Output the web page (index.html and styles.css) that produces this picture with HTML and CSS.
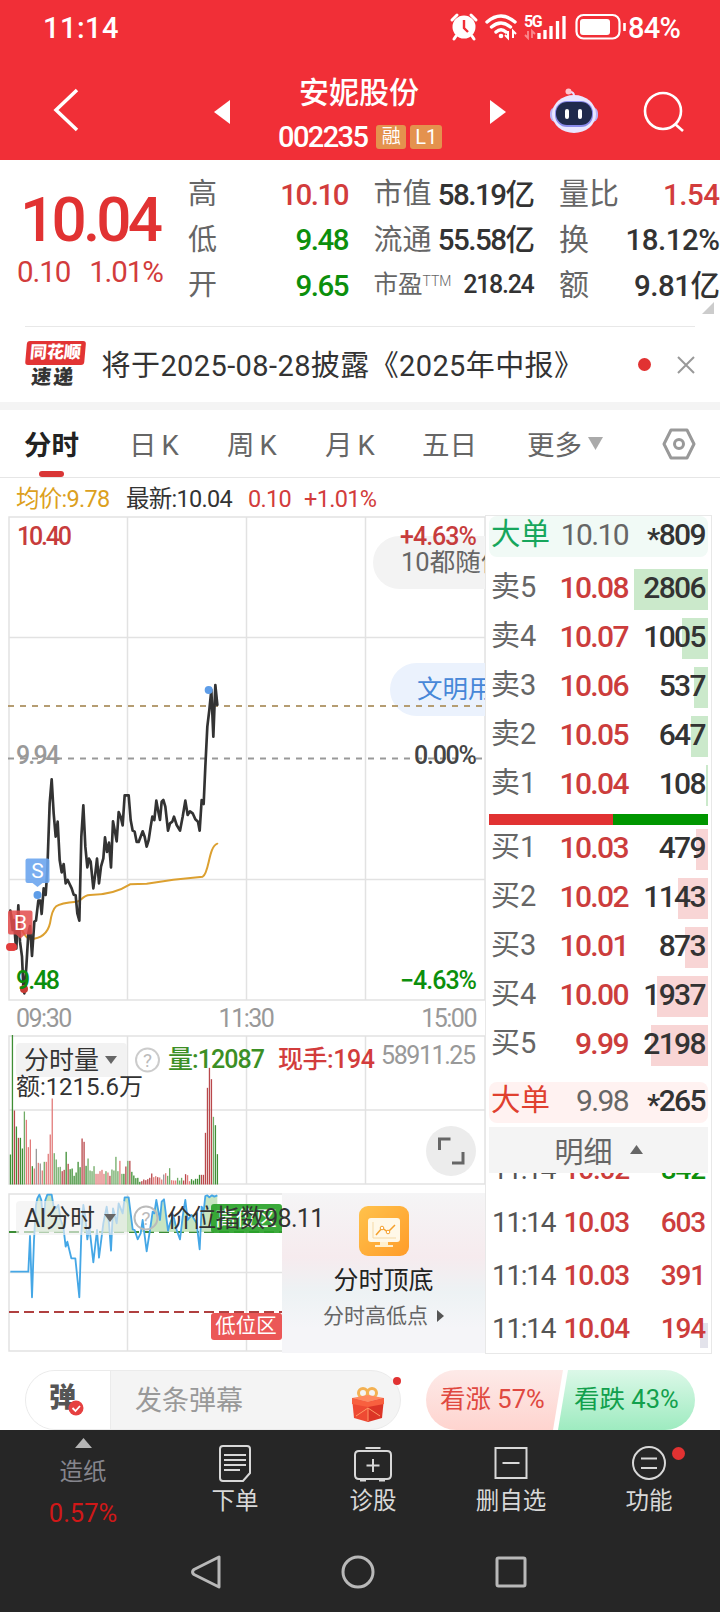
FILE: index.html
```html
<!DOCTYPE html>
<html lang="zh-CN">
<head>
    <meta charset="UTF-8">
    <meta name="viewport" content="width=device-width, initial-scale=1.0">
    <title>安妮股份 002235</title>
    <link rel="stylesheet" href="styles.css">
</head>
<body>
    <header class="header">
        <div class="statusbar">
            <span class="clock">11:14</span>
            <svg class="status-icons" width="178" height="30" viewBox="449 12 178 30" fill="none" stroke="#fff">
                <circle cx="464" cy="27" r="11.5" fill="#fff" stroke="none"/>
                <path d="M452 20l5-5M471 15l5 5M456 36l-2 3M472 36l2 3" stroke-width="3" stroke-linecap="round"/>
                <path d="M464 20v8l4 4" stroke="#f12f37" stroke-width="2.4"/>
                <path d="M487 22q14-12 28 0M491.500 27q9.500-8 19 0M496 32q5-4.500 10 0" stroke-width="3.400" stroke-linecap="round"/>
                <circle cx="501" cy="36" r="2.300" fill="#fff" stroke="none"/>
                <path d="M508 31v7l-3-3M513 38v-7l3 3" stroke-width="2"/>
                <text x="524" y="27" class="net">5G</text>
                <path d="M528 31v7l-3-3M532 38v-7l3 3" stroke="#f98a8e" stroke-width="1.800"/>
                <path d="M539 33v6M545 30v9M551 26v13M557.500 21v18M564 16v23" stroke-width="3.300"/>
                <rect x="576.500" y="15" width="43" height="23.500" rx="7" stroke-width="2.200"/>
                <rect x="580" y="19" width="30" height="16" rx="3" fill="#fff" stroke="none"/>
                <path d="M624.500 23v8" stroke-width="2.600"/>
            </svg>
            <span class="battery">84%</span>
        </div>
        <nav class="nav">
            <svg class="back" width="26" height="44" viewBox="0 0 26 44"><path d="M24 2L3 22l21 20" fill="none" stroke="#fff" stroke-width="3.500"/></svg>
            <svg class="prev" width="16" height="24" viewBox="0 0 16 24"><path d="M16 0v24L0 12z" fill="#fff"/></svg>
            <div class="title">
                <div class="name">安妮股份</div>
                <div class="code">002235<span class="tag">融</span><span class="tag tag-l1">L1</span></div>
            </div>
            <svg class="next" width="16" height="24" viewBox="0 0 16 24"><path d="M0 0v24L16 12z" fill="#fff"/></svg>
            <svg class="robot" width="50" height="46" viewBox="0 0 50 46">
                <path d="M25 8q0-4-4-4" fill="none" stroke="#e8dcff" stroke-width="2"/>
                <circle cx="19.500" cy="3.500" r="3" fill="#ffc5cf"/>
                <rect x="1" y="19" width="48" height="15" rx="6" fill="#b9b2f5"/>
                <ellipse cx="25" cy="26" rx="22" ry="19" fill="#e9e6ff"/>
                <rect x="6" y="13" width="38" height="26" rx="12" fill="#8a8bea"/>
                <rect x="7" y="14" width="36" height="23" rx="11" fill="#202a4c"/>
                <rect x="16" y="21" width="4" height="10" rx="2" fill="#fff"/>
                <rect x="29" y="21" width="4" height="10" rx="2" fill="#fff"/>
            </svg>
            <svg class="search" width="42" height="42" viewBox="0 0 42 42" fill="none" stroke="#fff" stroke-width="2.600"><circle cx="20" cy="20" r="18"/><path d="M32 33l8 7"/></svg>
        </nav>
    </header>

    <section class="quote">
        <div class="price">
            <div class="price-now">10.04</div>
            <div class="price-change"><span>0.10</span><span>1.01%</span></div>
        </div>
        <dl class="stats">
            <div><dt>高</dt><dd class="up">10.10</dd></div>
            <div><dt>市值</dt><dd>58.19亿</dd></div>
            <div class="wide"><dt>量比</dt><dd class="up">1.54</dd></div>
            <div><dt>低</dt><dd class="down">9.48</dd></div>
            <div><dt>流通</dt><dd>55.58亿</dd></div>
            <div class="wide"><dt>换</dt><dd>18.12%</dd></div>
            <div><dt>开</dt><dd class="down">9.65</dd></div>
            <div class="small"><dt>市盈<sup>TTM</sup></dt><dd>218.24</dd></div>
            <div class="wide"><dt>额</dt><dd>9.81亿</dd></div>
        </dl>
        <i class="corner"></i>
    </section>

    <section class="news">
        <div class="news-logo"><b>同花顺</b><em>速递</em></div>
        <span class="news-text">将于2025-08-28披露《2025年中报》</span>
        <i class="dot"></i>
        <svg width="18" height="18" viewBox="0 0 18 18"><path d="M1 1l16 16M17 1L1 17" stroke="#999" stroke-width="2"/></svg>
    </section>

    <nav class="tabs">
        <span class="tab active">分时</span>
        <span class="tab">日<i>K</i></span>
        <span class="tab">周<i>K</i></span>
        <span class="tab">月<i>K</i></span>
        <span class="tab">五日</span>
        <span class="tab">更多<svg width="15" height="13" viewBox="0 0 15 13"><path d="M0 0h15L7.500 13z" fill="#aaa"/></svg></span>
        <svg class="setting" width="34" height="32" viewBox="0 0 34 32" fill="none" stroke="#999" stroke-width="3"><path d="M9 2h16l7 14-7 14H9L2 16z" stroke-linejoin="round"/><circle cx="17" cy="16" r="4.500"/></svg>
    </nav>

    <div class="legend">
        <span class="avg">均价:9.78</span><span class="last">最新:10.04</span><span class="up diff">0.10</span><span class="up">+1.01%</span>
    </div>

    <main class="main">
        <div class="charts">
            <svg class="chart" width="486" height="488" viewBox="0 515 486 488">
                <g class="grid">
                    <path d="M9 517H485V1000H9zM127.500 517V1000M246.500 517V1000M365.500 517V1000M9 637.500H485M9 879.500H485"/>
                </g>
                <rect x="373" y="536" width="200" height="53" rx="26.500" fill="#f3f3f3"/>
                <text x="401" y="571" class="danmu">10都随便</text>
                <rect x="390" y="663" width="200" height="53" rx="26.500" fill="#ebf2fd"/>
                <text x="417" y="698" class="danmu blue">文明用语</text>
                <path d="M8 706H485" stroke="#b59d72" stroke-width="2" stroke-dasharray="6 6"/>
                <path d="M8 758.500H485" stroke="#999" stroke-width="2" stroke-dasharray="6 6"/>
                <!-- price and average lines, drawn in thirds of a pixel -->
                <g transform="translate(0 640) scale(.33333)" fill="none" stroke-linejoin="round" stroke-linecap="round">
                    <path stroke="#dca030" stroke-width="6" d="M31 812L45 860L66 870Q78 895 90 898Q140 895 150 850C158 795 165 790 230 785C245 785 245 766 270 765Q340 765 390 733L440 731L520 719L608 710C628 700 625 620 652 611"/>
                    <polyline stroke="#333" stroke-width="8" points="31,812 38,870 42,840 46,900 49,925 55,796 60,905 66,950 70,1040 73,1060 79,980 85,880 90,858 96,948 103,845 108,842 115,782 121,782 125,822 131,745 137,765 142,690 149,490 155,418 161,520 167,590 173,545 179,660 185,697 191,672 197,730 203,720 215,745 221,764 227,766 232,820 238,842 244,590 250,496 256,620 262,682 267,656 272,665 280,745 286,700 291,656 297,730 303,680 310,655 315,592 321,636 327,608 333,682 339,544 345,575 350,604 356,516 362,530 368,556 374,466 386,466 392,540 398,572 404,575 410,606 416,606 428,574 434,590 440,620 446,600 452,560 457,530 463,540 469,482 475,515 480,540 485,485 490,480 496,500 504,572 510,550 517,545 522,530 530,555 540,572 548,530 556,482 563,525 570,514 578,520 586,538 594,545 599,572 605,480 611,492 616,380 622,260 628,210 634,150 640,290 646,135 652,195"/>
                </g>
                <circle cx="208.700" cy="690" r="4" fill="#5e9de8"/>
                <circle cx="37.500" cy="895" r="4" fill="#5e9de8"/>
                <path d="M27.500 858.500h20a2 2 0 0 1 2 2v20.500a2 2 0 0 1-2 2h-5l-5 4-5-4h-5a2 2 0 0 1-2-2v-20.500a2 2 0 0 1 2-2z" fill="#6ba5ee" fill-opacity=".9"/>
                <text x="37.500" y="878" class="mark">S</text>
                <path d="M10 910.500h20.500a2 2 0 0 1 2 2v20a2 2 0 0 1-2 2h-5.500l-4.500 4-4.500-4h-6a2 2 0 0 1-2-2v-20a2 2 0 0 1 2-2z" fill="#e34b4b" fill-opacity=".85"/>
                <text x="20.500" y="930" class="mark">B</text>
                <circle cx="10" cy="947" r="4" fill="#e23d3d"/><circle cx="13" cy="947" r="4" fill="#e23d3d"/><circle cx="24" cy="989" r="4" fill="#c93b35"/>
                <text x="17" y="545" class="num red" textLength="55">10.40</text>
                <text x="400" y="545" class="num red" textLength="77">+4.63%</text>
                <text x="16" y="764" class="num gray" textLength="44">9.94</text>
                <text x="414" y="764" class="num" textLength="63">0.00%</text>
                <text x="16" y="989" class="num green" textLength="44">9.48</text>
                <text x="400" y="989" class="num green" textLength="77">−4.63%</text>
            </svg>
            <div class="times"><span>09:30</span><span>11:30</span><span>15:00</span></div>
            <svg class="volume" width="486" height="151" viewBox="0 1035 486 151">
                <g class="grid"><path d="M9 1036H485V1184H9zM127.500 1036V1184M246.500 1036V1184M365.500 1036V1184M9 1110H485"/></g>
                <rect x="16" y="1043" width="111" height="34" rx="4" fill="#f2f2f2"/>
                <g id="bars"></g>
                <text x="24" y="1069" class="ind">分时量</text>
                <path d="M105 1056h12l-6 8z" fill="#666"/>
                <circle cx="147.500" cy="1060" r="11.500" fill="none" stroke="#ccc" stroke-width="2"/>
                <text x="147.500" y="1067" class="help">?</text>
                <text x="168" y="1068" class="ind vol" textLength="97">量:12087</text>
                <text x="278" y="1068" class="ind hand" textLength="97">现手:194</text>
                <text x="381" y="1064" class="num gray light" textLength="95">58911.25</text>
                <text x="16" y="1095" class="ind amount" textLength="127">额:1215.6万</text>
                <circle cx="451" cy="1151" r="25" fill="#ececec"/>
                <path d="M439.500 1150v-11h11M463 1152v11h-11" fill="none" stroke="#666" stroke-width="3"/>
            </svg>
            <div class="ai">
                <svg width="282" height="160" viewBox="0 1193 282 160">
                    <clipPath id="high"><rect x="0" y="0" width="900" height="156"/></clipPath>
                    <g class="grid"><path d="M9 1194H300V1351H9zM127.500 1194V1351M246.500 1194V1351M9 1272.500H300"/></g>
                    <path d="M9 1232H282" stroke="#3c8c35" stroke-width="2" stroke-dasharray="10 5"/>
                    <path d="M9 1312H282" stroke="#b04040" stroke-width="2" stroke-dasharray="10 5"/>
                    <g transform="translate(0 1180) scale(.33333)">
                        <path id="aifill" clip-path="url(#high)" fill="#b9dfb2" fill-opacity=".8"/>
                        <polyline id="ailine" fill="none" stroke="#45a7e6" stroke-width="5.500" stroke-linejoin="round" points="31,275 85,275 90,168 96,352 102,180 108,75 112,55 118,44 124,60 130,140 136,60 142,44 155,44 161,80 168,85 175,75 182,120 190,140 197,200 202,185 214,235 226,235 238,352 244,160 250,75 256,110 262,178 268,140 280,247 291,150 297,233 310,130 320,80 327,130 333,212 339,85 350,130 356,70 368,100 374,52 386,52 392,100 398,148 404,150 413,178 422,160 428,120 440,214 450,150 458,95 463,100 469,60 480,120 485,65 492,58 504,152 510,130 520,105 530,150 540,178 548,110 556,60 563,120 575,105 590,130 599,208 605,80 611,95 616,48 622,46 628,52 636,46 643,50 652,46"/>
                    </g>
                    <rect x="16" y="1201" width="111" height="34" rx="4" fill="#f0f0f0" fill-opacity=".65"/>
                    <rect x="211" y="1204" width="71" height="29" rx="3" fill="#2aa32a" fill-opacity=".92"/>
                    <text x="246" y="1226" class="zone">高位区</text>
                    <rect x="211" y="1313" width="71" height="27" rx="3" fill="#eb5757"/>
                    <text x="246" y="1333" class="zone">低位区</text>
                    <path d="M104 1214h12l-6 8z" fill="#666"/>
                    <circle cx="146" cy="1218" r="11.500" fill="none" stroke="#bbb" stroke-width="2"/>
                    <text x="146" y="1225" class="help">?</text>
                </svg>
                <div class="promo">
                    <svg width="50" height="50" viewBox="0 0 50 50">
                        <defs><linearGradient id="or" x1="0" y1="0" x2="1" y2="1"><stop offset="0" stop-color="#ffc24c"/><stop offset="1" stop-color="#ff9c29"/></linearGradient></defs>
                        <rect width="50" height="50" rx="9" fill="url(#or)"/>
                        <rect x="9" y="12" width="32" height="24" rx="3" fill="#fff8e8"/>
                        <path d="M21 36h8v3h5v2H16v-2h5z" fill="#fff0cf"/>
                        <path d="M14 16v16h23" fill="none" stroke="#f5d9a6"/>
                        <path d="M17 29l6-7 6 4 7-7" fill="none" stroke="#f5a02d" stroke-width="1.500"/>
                        <circle cx="23" cy="22" r="1.800" fill="#fff" stroke="#f5a02d"/><circle cx="29" cy="26" r="1.800" fill="#fff" stroke="#f5a02d"/>
                    </svg>
                    <strong>分时顶底</strong>
                    <span>分时高低点<i></i></span>
                </div>
                <div class="ai-caption"><span>AI分时</span><span>价位指数98.11</span></div>
            </div>
        </div>

        <aside class="book">
            <div class="big sell"><span>大单</span><b>10.10</b><b><u>*</u>809</b></div>
            <div class="level sell"><span>卖5</span><b>10.08</b><b>2806</b><i style="width:74px"></i></div>
            <div class="level sell"><span>卖4</span><b>10.07</b><b>1005</b><i style="width:26px"></i></div>
            <div class="level sell"><span>卖3</span><b>10.06</b><b>537</b><i style="width:14px"></i></div>
            <div class="level sell"><span>卖2</span><b>10.05</b><b>647</b><i style="width:17px"></i></div>
            <div class="level sell"><span>卖1</span><b>10.04</b><b>108</b><i style="width:2px"></i></div>
            <div class="ratio"><i style="width:124px"></i></div>
            <div class="level buy"><span>买1</span><b>10.03</b><b>479</b><i style="width:12px"></i></div>
            <div class="level buy"><span>买2</span><b>10.02</b><b>1143</b><i style="width:30px"></i></div>
            <div class="level buy"><span>买3</span><b>10.01</b><b>873</b><i style="width:23px"></i></div>
            <div class="level buy"><span>买4</span><b>10.00</b><b>1937</b><i style="width:51px"></i></div>
            <div class="level buy"><span>买5</span><b>9.99</b><b>2198</b><i style="width:57px"></i></div>
            <div class="big buy"><span>大单</span><b>9.98</b><b><u>*</u>265</b></div>
            <div class="detail">明细<svg width="13" height="9" viewBox="0 0 13 9"><path d="M0 9h13L6.500 0z" fill="#666"/></svg></div>
            <div class="trades">
                <div><span>11:14</span><b>10.02</b><b class="down">842</b></div>
                <div><span>11:14</span><b>10.03</b><b>603</b></div>
                <div><span>11:14</span><b>10.03</b><b>391</b></div>
                <div><span>11:14</span><b>10.04</b><b>194</b></div>
                <i class="scroll"></i>
            </div>
        </aside>
    </main>

    <section class="comment">
        <div class="input">
            <div class="switch">弹<svg width="16" height="16" viewBox="0 0 16 16"><circle cx="8" cy="8" r="7.500" fill="#e64040"/><path d="M4.500 8l3 3 4.500-5" fill="none" stroke="#fff" stroke-width="1.800"/></svg></div>
            <div class="placeholder">发条弹幕</div>
            <svg class="gift" width="34" height="36" viewBox="0 0 34 36">
                <circle cx="12" cy="6" r="4.500" fill="none" stroke="#f3b152" stroke-width="3"/><circle cx="21" cy="6" r="4.500" fill="none" stroke="#f3b152" stroke-width="3"/>
                <path d="M1 11l16-3 16 3-16 4z" fill="#ff8a60"/>
                <path d="M1 11l16 4v20L3 31z" fill="#ee4a33"/><path d="M33 11l-16 4v20l14-4z" fill="#dc3527"/>
                <path d="M1 11l16 4v5L1 17zM33 11l-16 4v5l16-3z" fill="#f8603f"/>
                <path d="M17 21L5 29M17 21l12 8M17 21v13" stroke="#ff9966" fill="none"/>
            </svg>
            <i class="badge"></i>
        </div>
        <div class="vote">
            <span class="vote-up">看涨 57%</span><span class="vote-down">看跌 43%</span>
        </div>
    </section>

    <footer class="footer">
        <div class="actions">
            <div class="industry"><svg width="17" height="10" viewBox="0 0 17 10"><path d="M0 10h17L8.500 0z" fill="#b5b5b5"/></svg><span>造纸</span><em>0.57%</em></div>
            <div class="action">
                <svg width="40" height="40" viewBox="0 0 40 40"><path d="M8 3h24q3 0 3 3v24l-7 8H8q-3 0-3-3V6q0-3 3-3zM9 12h22M9 17h22M9 22h22M9 27h16"/></svg>下单
            </div>
            <div class="action">
                <svg width="40" height="40" viewBox="0 0 40 40"><path d="M6 8h28q4 0 4 4v20q0 4-4 4H6q-4 0-4-4V12q0-4 4-4zM12.500 5h15M20 16v13M13.500 22.500h13M7 37.500h6M26 37.500h6"/></svg>诊股
            </div>
            <div class="action">
                <svg width="40" height="40" viewBox="0 0 40 40"><path d="M4.500 5h31v30h-31zM11.500 20h17"/></svg>删自选
            </div>
            <div class="action">
                <svg width="40" height="40" viewBox="0 0 40 40"><circle cx="20" cy="20" r="16"/><path d="M12 15.500h16M12 25h16"/></svg>功能<i class="badge"></i>
            </div>
        </div>
        <div class="sysnav">
            <svg width="30" height="34" viewBox="0 0 30 34"><path d="M28 2v30L3 19.500Q0 17 3 14.500z"/></svg>
            <svg width="34" height="34" viewBox="0 0 34 34"><circle cx="17" cy="17" r="15"/></svg>
            <svg width="32" height="32" viewBox="0 0 32 32"><rect x="2" y="2" width="28" height="28" rx="1.500"/></svg>
        </div>
    </footer>

    <script>
        // r/g - strong red/green, R/G - light, n - neutral; number is the bar height
        const bars = 'g90 g449 r222 g174 r140 g140 g108 G219 R194 R112 R135 g55 R48 n107 R65 n63 R42 G68 R68 R92 R150 R258 G94 G75 G52 G53 r40 r44 g98 r62 g46 g48 g26 g36 g68 g52 r138 r128 g56 G78 G42 G40 G55 R32 R32 R40 R44 R32 G40 R36 r26 G45 G42 G83 G40 R71 G32 g32 r54 G71 r71 g38 g27 g19 g20 g8 r10 r15 r13 r16 r20 r33 R22 R25 r22 R21 R15 n30 R34 G26 G49 R13 R12 R12 G20 G12 G20 r12 r31 R28 R10 g16 g12 g17 g17 g29 r29 r29 r155 r290 r350 r316 G203 g178 g91';
        const colors = { r: '#b9484b', g: '#3f8f35', R: '#e27b7a', G: '#70ab66', n: '#999' };
        document.getElementById('bars').innerHTML = bars.split(' ').map((bar, i) => {
            const h = bar.slice(1) / 3;
            return `<rect x="${(9.800 + i * 1.990).toFixed(2)}" y="${(1184.500 - h).toFixed(2)}" width="1.3" height="${h.toFixed(2)}" fill="${colors[bar[0]]}"/>`;
        }).join('');

        const line = document.getElementById('ailine').getAttribute('points');
        document.getElementById('aifill').setAttribute('d', 'M' + line + ' 652,275z');
    </script>
</body>
</html>
```

FILE: styles.css
```css
* {
    box-sizing: border-box;
}
body {
    margin: 0;
    width: 720px;
    height: 1612px;
    overflow: hidden;
    background: #fff;
    color: #333;
    font-family: Roboto, "Noto Sans CJK SC", sans-serif;
}
svg {
    display: block;
    flex: none;
}
i, em {
    font-style: normal;
}
.up {
    color: #d23c3c;
}
.down {
    color: #0c8f0c;
}

/* header */
.header {
    height: 160px;
    background: #f12f37;
    color: #fff;
}
.statusbar {
    display: flex;
    align-items: center;
    height: 54px;
    padding-left: 43px;
    font-size: 29px;
    line-height: 36px;
    font-weight: 500;
}
.clock {
    width: 406px;
    padding-top: 2px;
    letter-spacing: 0.5px;
}
.battery {
    margin-left: 1px;
    padding-top: 2px;
    letter-spacing: -0.7px;
}
.net {
    font-size: 16px;
    font-weight: 700;
    fill: #fff;
    stroke: none;
    letter-spacing: -1.5px;
}
.nav {
    display: flex;
    height: 106px;
    padding-top: 2px;
}
.back {
    margin: 32px 0 0 53px;
}
.prev {
    margin: 44px 0 0 135px;
}
.title {
    width: 258px;
    text-align: center;
}
.name {
    margin-top: 17px;
    font-size: 30px;
    line-height: 40px;
    font-weight: 500;
}
.code {
    display: flex;
    align-items: center;
    height: 48px;
    margin: 0 0 0 48px;
    font-size: 29px;
    font-weight: 500;
    letter-spacing: -1.6px;
}
.tag {
    width: 30px;
    height: 24px;
    margin-left: 9px;
    border-radius: 3px;
    background: #e4924e;
    font-size: 19px;
    line-height: 24px;
    font-weight: 400;
    letter-spacing: 0;
}
.tag-l1 {
    width: 32px;
    margin-left: 4px;
    font-size: 20px;
}
.next {
    margin: 44px 0 0 2px;
}
.robot {
    margin: 32px 0 0 43px;
}
.search {
    margin: 35px 0 0 44px;
}

/* quote */
.quote {
    display: flex;
    position: relative;
    height: 166px;
}
.price {
    width: 188px;
    padding-top: 27px;
    color: #e13232;
}
.price-now {
    padding-left: 20px;
    font-size: 62px;
    line-height: 66px;
    font-weight: 500;
    letter-spacing: -3.8px;
}
.price-change {
    display: flex;
    gap: 19px;
    padding: 1px 0 0 17px;
    color: #d23c3c;
    font-size: 29.500px;
    line-height: 36px;
    letter-spacing: -1.1px;
}
.stats {
    display: grid;
    grid-template-columns: 160px 160px 160.500px;
    grid-template-rows: repeat(3, 45.500px);
    column-gap: 25.500px;
    margin: 12px 0 0;
}
.stats div {
    display: flex;
    justify-content: space-between;
    align-items: center;
    white-space: nowrap;
}
.stats dt {
    color: #666;
    font-size: 29px;
    line-height: 44px;
    padding-bottom: 1px;
}
.stats dd {
    margin: 0;
    font-size: 29.500px;
    line-height: 44px;
    font-weight: 500;
    letter-spacing: -1.5px;
}
.stats .wide dt {
    font-size: 30px;
}
.stats .wide dd {
    letter-spacing: -0.5px;
}
.stats .small dt {
    font-size: 24.500px;
}
.stats .small dd {
    font-size: 25px;
    letter-spacing: -1.3px;
    padding-bottom: 2px;
}
.stats sup {
    font-size: 14px;
    font-weight: 300;
    vertical-align: 7px;
    line-height: 0;
}
.corner {
    position: absolute;
    right: 6px;
    bottom: 12px;
    border-left: 12px solid transparent;
    border-bottom: 12px solid #ccc;
}

/* news */
.news {
    display: flex;
    align-items: center;
    height: 76px;
    margin: 0 25px;
    border-top: 1px solid #e8e8e8;
}
.news-logo {
    width: 59px;
    height: 48px;
    text-align: center;
    transform: skewX(-5deg);
}
.news-logo b {
    display: block;
    height: 24px;
    border-radius: 3px;
    background: #e23434;
    color: #fff;
    font-size: 17px;
    line-height: 23px;
    font-weight: 900;
}
.news-logo em {
    display: block;
    font-size: 20px;
    line-height: 25px;
    font-weight: 900;
    letter-spacing: 2px;
}
.news-text {
    width: 540px;
    margin-left: 18px;
    padding-bottom: 4px;
    font-size: 29px;
    letter-spacing: 0.4px;
    white-space: nowrap;
}
.dot {
    width: 13px;
    height: 13px;
    margin-right: 26px;
    border-radius: 50%;
    background: #e13232;
}

/* period tabs */
.tabs {
    display: flex;
    position: relative;
    height: 76px;
    padding-left: 24px;
    border-top: 8px solid #f4f4f4;
    border-bottom: 1px solid #e6e6e6;
    color: #666;
    font-size: 27.500px;
    line-height: 67px;
}
.tab {
    display: flex;
    align-items: center;
    width: 98px;
    padding-top: 3px;
}
.tab i {
    margin-left: 5px;
}
.tab:nth-child(1) {
    width: 105px;
}
.tab:nth-child(4) {
    width: 97px;
}
.tab:nth-child(5) {
    width: 105px;
}
.tab:nth-child(6) {
    width: 135px;
}
.tab svg {
    margin: -4px 0 0 6px;
}
.active {
    color: #222;
    font-weight: 700;
}
.active::after {
    content: "";
    position: absolute;
    left: 39px;
    bottom: 0;
    width: 25px;
    height: 6px;
    border-radius: 3px;
    background: #d93636;
}
.setting {
    margin-top: 18px;
}

.legend {
    display: flex;
    height: 37px;
    padding: 3px 0 0 16px;
    font-size: 23.500px;
    line-height: 36px;
    letter-spacing: -0.7px;
}
.avg {
    width: 110px;
    color: #dca020;
}
.last {
    width: 122px;
}
.diff {
    width: 56px;
}

/* charts */
.main {
    display: flex;
    height: 839px;
}
.charts {
    width: 485px;
}
.grid {
    fill: none;
    stroke: #e2e2e2;
    stroke-width: 1.5;
}
.num {
    font-size: 25px;
    font-weight: 500;
    fill: #444;
}
.num.red {
    fill: #c73c3c;
}
.num.green {
    fill: #0c8f0c;
}
.num.gray {
    fill: #999;
}
.num.light {
    font-weight: 400;
}
.danmu {
    font-size: 25.500px;
    fill: #666;
}
.danmu.blue {
    fill: #4787d8;
}
.mark {
    font-size: 21px;
    fill: #fff;
    text-anchor: middle;
}
.times {
    display: flex;
    justify-content: space-between;
    height: 32px;
    padding: 0 9px 0 16px;
    color: #999;
    font-size: 25px;
    line-height: 31px;
    letter-spacing: -1.5px;
}
.ind {
    font-size: 25px;
    fill: #333;
}
.ind.vol {
    font-weight: 500;
    fill: #3c8f25;
}
.ind.hand {
    font-weight: 500;
    fill: #d23c3c;
}
.ind.amount {
    font-size: 24px;
}
.help {
    font-size: 19px;
    fill: #bbb;
    text-anchor: middle;
}
.zone {
    font-size: 20.500px;
    fill: #fff;
    text-anchor: middle;
}
.ai {
    display: flex;
    position: relative;
    height: 160px;
    margin-top: 7px;
}
.ai-caption {
    position: absolute;
    left: 24px;
    top: 8px;
    display: flex;
    font-size: 25px;
    line-height: 36px;
    white-space: nowrap;
    letter-spacing: -0.7px;
}
.ai-caption span:first-child {
    width: 143px;
}
.promo {
    width: 203px;
    padding-top: 13px;
    background: linear-gradient(#f5f5f6, #f6ebee 40%, #edf2f4 62%, #f5f5f8 85%);
    text-align: center;
}
.promo svg {
    margin: 0 auto 7px;
}
.promo strong {
    display: block;
    color: #222;
    font-size: 25px;
    line-height: 36px;
    font-weight: 400;
}
.promo span {
    display: flex;
    align-items: center;
    justify-content: center;
    color: #666;
    font-size: 21px;
    line-height: 34px;
}
.promo span i {
    margin-left: 9px;
    border: 6px solid transparent;
    border-left: 7px solid #555;
    border-right: 0;
}

/* order book */
.book {
    width: 227px;
    border: 1px solid #e8e8e8;
    padding: 0 3px;
    font-size: 29px;
}
.book b {
    padding-right: 1px;
    font-size: 30px;
    font-weight: 500;
    letter-spacing: -1.6px;
    text-align: right;
    z-index: 1;
}
.book u {
    position: relative;
    top: 4px;
    text-decoration: none;
}
.big, .level {
    display: grid;
    grid-template-columns: 60px 78px 77px;
    position: relative;
    height: 41px;
    padding-left: 2px;
    color: #333;
    line-height: 38px;
    white-space: nowrap;
}
.big span, .level span {
    line-height: 36px;
}
.big {
    border-radius: 8px;
}
.big span {
    font-size: 29.500px;
}
.big b:nth-child(2) {
    color: #666;
    font-weight: 400;
}
.big.sell {
    margin-bottom: 12px;
    background: #f1faf6;
}
.big.sell span {
    color: #17a65c;
}
.big.buy {
    margin-top: 15.500px;
    background: #fff2f1;
}
.big.buy span {
    color: #e0402f;
}
.level {
    margin-bottom: 8px;
}
.level span {
    color: #666;
}
.level b:nth-child(2) {
    color: #cc3d3c;
}
.level i {
    position: absolute;
    right: 0;
    top: 0;
    height: 41px;
    background: #cbe9cb;
}
.buy i {
    background: #f8d5d5;
}
.ratio {
    height: 10.500px;
    margin-bottom: 4.500px;
    background: #009600;
}
.ratio i {
    display: block;
    height: 100%;
    background: #e13232;
}
.detail {
    display: flex;
    align-items: center;
    justify-content: center;
    gap: 17px;
    height: 46px;
    margin-top: 4px;
    background: #f4f4f4;
    color: #666;
}
.trades {
    position: relative;
    height: 177px;
    overflow: hidden;
}
.trades div {
    display: grid;
    grid-template-columns: 60px 79px 76px;
    align-items: center;
    height: 53px;
    padding-left: 3px;
    color: #cc3d3c;
}
.trades div:first-child {
    margin-top: -30px;
}
.trades span {
    color: #555;
    font-size: 28px;
    letter-spacing: -1.3px;
}
.trades b {
    padding: 0 2px 0 0;
    font-size: 28px;
    letter-spacing: -1.2px;
}
.trades .down {
    color: #0c8f0c;
}
.scroll {
    position: absolute;
    right: 0;
    bottom: 2px;
    width: 8px;
    height: 25px;
    background: rgba(200, 200, 215, 0.5);
}

/* comment line */
.comment {
    display: flex;
    justify-content: space-between;
    height: 76px;
    padding: 16px 25px 0;
}
.input {
    display: flex;
    position: relative;
    width: 376px;
    height: 60px;
    border: 1px solid #ebebeb;
    border-radius: 30px;
    background: #f4f4f4;
}
.switch {
    position: relative;
    width: 85px;
    padding-left: 23px;
    border-right: 1px solid #ebebeb;
    border-radius: 30px 0 0 30px;
    background: #fff;
    color: #555;
    font-size: 27px;
    line-height: 54px;
    font-weight: 900;
}
.switch svg {
    position: absolute;
    left: 42px;
    top: 29px;
}
.placeholder {
    width: 241px;
    padding-left: 24px;
    color: #999;
    font-size: 27px;
    line-height: 60px;
}
.gift {
    margin: 16px 0 0 -1px;
}
.badge {
    position: absolute;
    right: -1px;
    top: 6px;
    width: 8px;
    height: 8px;
    border-radius: 50%;
    background: #e13232;
}
.vote {
    display: flex;
    position: relative;
    width: 269px;
    height: 60px;
    font-size: 25.500px;
    line-height: 59px;
    white-space: nowrap;
}
.vote span {
    width: 137px;
    padding-left: 14px;
}
.vote-up {
    border-radius: 30px 0 0 30px;
    background: linear-gradient(#fdeae8, #fed4cf);
    clip-path: polygon(0 0, 100% 0, 127px 100%, 0 100%);
    color: #e04840;
}
.vote .vote-down {
    width: 137px;
    margin-left: -5px;
    border-radius: 0 30px 30px 0;
    background: linear-gradient(#dcf8e8, #9eebc0);
    clip-path: polygon(10px 0, 100% 0, 100% 100%, 0 100%);
    color: #12a04d;
    padding-left: 16px;
}

/* footer */
.footer {
    height: 183px;
    background: #262626;
    color: #d8d8d8;
}
.actions {
    display: flex;
    height: 112px;
    padding-left: 13px;
    font-size: 23.500px;
}
.industry {
    width: 153px;
    padding: 8px 13px 0 0;
    text-align: center;
    color: #85858d;
}
.industry svg {
    margin: 0 auto;
}
.industry span, .industry em {
    display: block;
    line-height: 41px;
}
.industry span {
    margin-top: 4px;
}
.industry em {
    color: #d01818;
    font-size: 25.500px;
}
.action {
    position: relative;
    width: 138px;
    padding-top: 13px;
    text-align: center;
    line-height: 37px;
}
.action svg {
    margin: 0 auto;
    fill: none;
    stroke: #d8d8d8;
    stroke-width: 2;
}
.action .badge {
    right: 33px;
    top: 17px;
    width: 13px;
    height: 13px;
}
.sysnav {
    display: flex;
    align-items: center;
    gap: 120px;
    height: 60px;
    padding-left: 191px;
}
.sysnav svg {
    fill: none;
    stroke: #b8b8b8;
    stroke-width: 3;
    stroke-linejoin: round;
}
```
